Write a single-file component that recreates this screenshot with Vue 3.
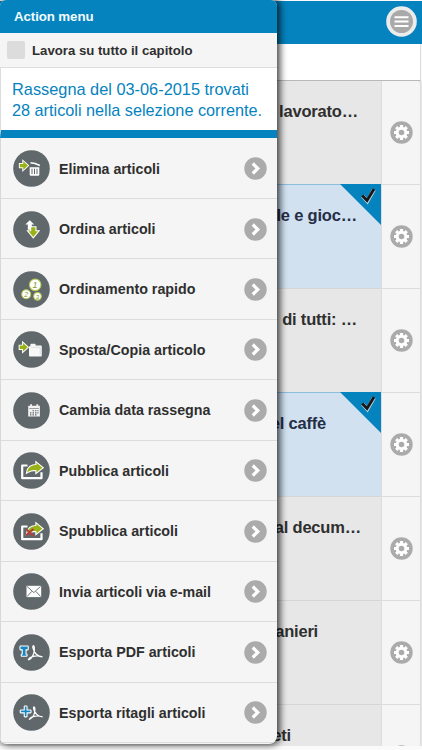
<script setup>
const menu = [
  { icon: 'trash', label: 'Elimina articoli', w: 101 },
  { icon: 'sort', label: 'Ordina articoli', w: 96.5 },
  { icon: 'rank', label: 'Ordinamento rapido', w: 136.5 },
  { icon: 'move', label: 'Sposta/Copia articolo', w: 146.5 },
  { icon: 'calendar', label: 'Cambia data rassegna', w: 151.5 },
  { icon: 'publish', label: 'Pubblica articoli', w: 110 },
  { icon: 'unpublish', label: 'Spubblica articoli', w: 119 },
  { icon: 'mail', label: 'Invia articoli via e-mail', w: 152 },
  { icon: 'pdf', label: 'Esporta PDF articoli', w: 136.5 },
  { icon: 'clip', label: 'Esporta ritagli articoli', w: 146.5 }
]
const articles = [
  { title: 'lavorato…', end: 358 },
  { title: 'le e gioc…', end: 357, selected: true },
  { title: 'di tutti: …', end: 357 },
  { title: 'el caffè', end: 326, selected: true },
  { title: 'al decum…', end: 361 },
  { title: 'anieri', end: 318 },
  { title: 'eti', end: 291 }
]
const ARROW = 'M0 3h4V0l5.5 5L4 10V7H0z'
const SHARE = 'M14.2 20.2c.8-5 4.3-7.2 9.2-7.2v-2.2l6 4.9-6 4.7v-2.5c-4.2 0-6.6.6-9.2 2.3z'
const ACROBAT = 'M1 15.3C5 14 8.2 7.5 7 2.2 6.5.2 5.3 1 5.7 3c.9 5.2 5 9 9.6 9.2M1 15.3c1.2-3.6 8-5.2 14.3-3.1'
</script>

<template>
  <div class="screen">
    <header class="bar">
      <svg class="burger" viewBox="0 0 31 31">
        <circle cx="15.5" cy="15.5" r="15.3" fill="#ececec" />
        <circle cx="15.5" cy="15.5" r="11.5" fill="#a9a9a9" />
        <path d="M8.5 11.3h14M8.5 15.6h14M8.5 19.9h14" stroke="#fff" stroke-width="2" />
      </svg>
    </header>
    <div class="filter"></div>
    <main class="list">
      <article v-for="a in articles" :key="a.title" class="row" :class="{ selected: a.selected }">
        <div class="body">
          <h3 :style="{ width: a.end + 'px' }">{{ a.title }}</h3>
          <svg v-if="a.selected" class="corner" viewBox="0 0 41 41">
            <path d="M0 0h41v41z" fill="#0583be" />
            <path d="M22.5 12l4.8 5.2L34 5.5" fill="none" stroke="#b9cdd6" stroke-width="4" />
            <path d="M22.2 11.5l4.8 5L34 5" fill="none" stroke="#15191c" stroke-width="2.9" />
          </svg>
        </div>
        <div class="side">
          <svg class="gear" viewBox="0 0 23 23">
            <circle cx="11.5" cy="11.5" r="11.2" fill="#ababab" />
            <path d="M11.5 4v15M4 11.5h15M6.2 6.2l10.6 10.6M16.8 6.2L6.2 16.8" stroke="#fff" stroke-width="3.2" />
            <circle cx="11.5" cy="11.5" r="5.8" fill="#fff" />
            <circle cx="11.5" cy="11.5" r="2.8" fill="#ababab" />
          </svg>
        </div>
      </article>
    </main>

    <aside class="panel">
      <div class="heading">Action menu</div>
      <label class="scope"><span class="box"></span><svg class="scopetext" viewBox="0 0 170 20"><text x="0" y="15" textLength="160.5" lengthAdjust="spacingAndGlyphs">Lavora su tutto il capitolo</text></svg></label>
      <div class="summary">
        <svg viewBox="0 0 265 61">
          <text x="0" y="27.2" textLength="237" lengthAdjust="spacingAndGlyphs">Rassegna del 03-06-2015 trovati</text>
          <text x="0" y="47.6" textLength="250" lengthAdjust="spacingAndGlyphs">28 articoli nella selezione corrente.</text>
        </svg>
      </div>
      <nav class="items">
        <div v-for="m in menu" :key="m.icon" class="item">
          <svg class="icon" viewBox="0 0 37 37">
            <circle cx="18.5" cy="18.5" r="18.3" fill="#60686b" />
            <g v-if="m.icon === 'trash'">
              <path :d="ARROW" transform="translate(6.8 11.3) scale(.86)" class="arrow" />
              <path d="M16.7 17.2h9.6v7.3q0 1.2-1.2 1.2h-7.2q-1.2 0-1.2-1.2z" fill="#fff" />
              <path d="M19 18.7v5.4M21.5 18.7v5.4M24 18.7v5.4" stroke="#60686b" />
              <path d="M17.5 12.8l4.6.7 4.8 2" fill="none" stroke="#fff" stroke-width="1.6" />
            </g>
            <g v-else-if="m.icon === 'sort'">
              <path d="M16.8 9.2l4.4 4.4h-2.4v5.2h-4v-5.2h-2.5z" fill="#fff" />
              <path d="M18.2 16.3h4.2v4h2.6l-4.7 5.8-4.7-5.8h2.6z" class="arrow" />
            </g>
            <g v-else-if="m.icon === 'rank'" class="rank">
              <circle cx="22.2" cy="13.8" r="5.8" /><circle cx="13.2" cy="23.2" r="4.5" /><circle cx="24.5" cy="25.3" r="3.8" />
              <text x="22" y="17" font-size="9">1</text><text x="13.1" y="25.8" font-size="7">2</text><text x="24.4" y="27.5" font-size="6">3</text>
            </g>
            <g v-else-if="m.icon === 'move'">
              <path :d="ARROW" transform="translate(6.6 12) scale(.86)" class="arrow" />
              <path d="M16 15.3h1.4v-1.7q0-.8.8-.8h3.6q.8 0 .8.8v.8h5.2q1 0 1 1v9q0 1-1 1H17q-1 0-1-1z" fill="#f8f8f8" />
              <path d="M18 16.4h9.2v7.8" fill="none" stroke="#d6d9da" stroke-width=".7" />
            </g>
            <g v-else-if="m.icon === 'calendar'">
              <path d="M15.2 13.8h2v-1.6h1.8v1.6h4.4v-1.6h1.8v1.6h1.7v10.7H15.2z" fill="#f2f2f2" />
              <path d="M16.3 16.5h9.6" stroke="#60686b" stroke-width=".6" />
              <path d="M19.5 18.8h1.5M22 18.8h1.5M24.4 18.8h1.1M17 20.9h1.4M19.5 20.9h1.5M22 20.9h1.5M24.4 20.9h1.1M17 22.9h1.4M19.5 22.9h1.5M22 22.9h1.5" stroke="#60686b" stroke-width="1.1" />
            </g>
            <g v-else-if="m.icon === 'publish' || m.icon === 'unpublish'">
              <path d="M14.5 13.5H9.2v12.7h19.3v-6" fill="none" stroke="#fff" stroke-width="2.2" stroke-linejoin="round" />
              <path :d="SHARE" class="arrow" />
              <path v-if="m.icon === 'unpublish'" d="M13.5 16.5l7 6.5M20.5 16l-7.5 6.3" stroke="#b63c37" stroke-width="1.9" />
            </g>
            <g v-else-if="m.icon === 'mail'">
              <rect x="13.5" y="12.8" width="14.7" height="11.3" fill="#fff" />
              <path d="M14 13.4l6.8 6.2 6.8-6.2M14 23.6l4.8-5.2M27.7 23.6l-4.8-5.2" fill="none" stroke="#60686b" stroke-width=".9" />
            </g>
            <g v-else-if="m.icon === 'pdf'">
              <path d="M7.5 12.5h7.2v2.8h-2.2v5.2h1v1.2H8.8v-1.2h1v-5.2H7.5z" class="blue" />
              <path :d="ACROBAT" transform="translate(14.2 10.7)" class="acrobat" />
            </g>
            <g v-else>
              <path d="M11.8 12.6h1.7v4h4v1.7h-4v4h-1.7v-4h-4v-1.7h4z" class="blue" />
              <path :d="ACROBAT" transform="translate(15.2 12) scale(.94 .89)" class="acrobat" />
            </g>
          </svg>
          <svg class="label" viewBox="0 0 180 22"><text x="0" y="16" :textLength="m.w" lengthAdjust="spacingAndGlyphs">{{ m.label }}</text></svg>
          <svg class="go" viewBox="0 0 23 23">
            <circle cx="11.5" cy="11.5" r="11.2" fill="#ababab" />
            <path d="M8.8 6.5l5 5-5 5" fill="none" stroke="#fff" stroke-width="3.2" />
          </svg>
        </div>
      </nav>
    </aside>
  </div>
</template>

<style>
body { background: #fafafa; }
</style>
<style scoped>
.screen { position: relative; box-sizing: border-box; width: 422px; height: 750px; padding-top: 1px; overflow: hidden; background: #fafafa; font-family: "Liberation Sans", Arial, sans-serif; color: #2f2f2f; }
svg { display: block; flex: none; }
.bar { display: flex; justify-content: flex-end; align-items: center; height: 43px; padding: 0 5px 2px 0; box-sizing: border-box; background: #0583be; }
.burger { width: 31px; height: 31px; }
.filter { box-sizing: border-box; height: 37px; margin-right: 1px; background: #fff; border-bottom: 1px solid #b9b9b9; border-right: 1px solid #ddd; }
.list { box-sizing: border-box; height: 665px; overflow: hidden; }
.row { display: flex; box-sizing: border-box; height: 104px; background: #e7e7e7; }
.row:first-child .side { border-top-right-radius: 4px; }
.body { position: relative; width: 381px; height: 104px; box-sizing: border-box; border-bottom: 1px solid #d6d6d6; }
.selected .body { background: #d1e1f0; color: #252e47; }
.selected .body { box-shadow: 0 -1px #8bbfdf; }
h3 { margin: 0; padding-top: 20px; font-size: 16.5px; line-height: 20px; letter-spacing: -.2px; text-align: right; white-space: nowrap; }
.corner { position: absolute; top: -1px; right: 0; width: 41px; height: 41px; }
.side { display: flex; align-items: center; justify-content: center; box-sizing: border-box; width: 40px; border: solid #dcdcdc; border-width: 0 1px 1px; background: #f5f5f5; }
.gear { width: 23px; height: 23px; }
.list { margin-top: 0; }
.panel { position: absolute; top: 0; left: 0; box-sizing: border-box; width: 277px; height: 744px; overflow: hidden; border-radius: 6px 6px 8px 6px; background: #f5f5f5; box-shadow: 2px 0 7px 1px rgba(0, 0, 0, .75); }
.heading { box-sizing: border-box; height: 33px; padding-left: 14px; background: #0583be; color: #f2fbff; font-size: 13.3px; font-weight: bold; letter-spacing: -.1px; line-height: 34px; }
.scope { display: flex; align-items: center; gap: 7px; height: 34px; padding-left: 7px; border-bottom: 1px solid #ddd; }
.box { width: 18px; height: 18px; border-radius: 2px; background: #dcdcdc; }
.scopetext { width: 170px; height: 20px; font-size: 13.4px; font-weight: bold; fill: #2f2f2f; }
.summary { height: 62px; padding-left: 11px; border-left: 1px solid #ddd; border-bottom: 8px solid #0583be; background: #fff; font-size: 16.2px; }
.summary svg { width: 265px; height: 61px; fill: #0583be; }
.items { padding-top: .6px; border-left: 1px solid #d8d8d8; }
.item { display: flex; align-items: center; box-sizing: border-box; height: 60.45px; padding: .5px 0 0 11.5px; border-bottom: 1px solid #dcdcdc; }
.icon { width: 37px; height: 37px; }
.label { width: 180px; height: 22px; margin: 0 5px 0 9.5px; font-size: 14.4px; font-weight: bold; fill: #2f2f2f; }
.go { width: 23px; height: 23px; }
.arrow { fill: #99b216; stroke: #fff; stroke-width: 2.2; paint-order: stroke; }
.rank circle { fill: #fff; stroke: #b5c94d; stroke-width: 1.1; }
.rank text { fill: #87992e; font-style: italic; text-anchor: middle; }
.blue { fill: #1685c1; stroke: #fff; stroke-width: 2.2; paint-order: stroke; stroke-linejoin: round; }
.acrobat { fill: none; stroke: #fff; stroke-width: 1.3; }
</style>
